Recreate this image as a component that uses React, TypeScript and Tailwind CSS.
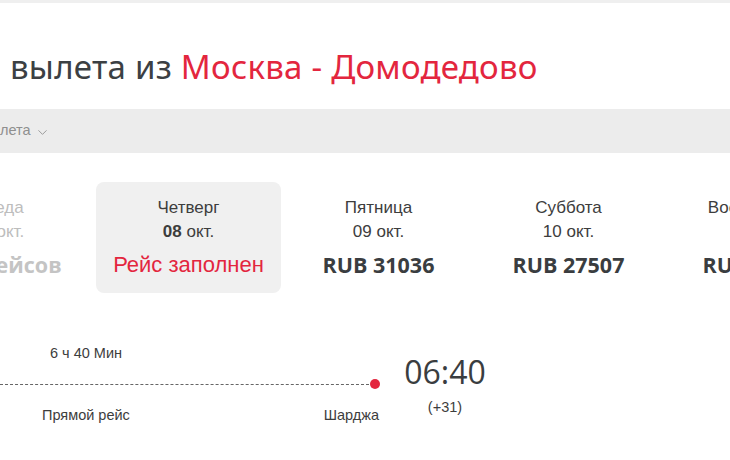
import { ChevronDown } from "lucide-react";

interface DayProps {
  day: string;
  date: string;
  boldDate?: boolean;
  price?: string;
  full?: boolean;
  empty?: boolean;
  active?: boolean;
}

const days: DayProps[] = [
  { day: "Среда", date: "07 окт.", empty: true },
  { day: "Четверг", date: "08 окт.", boldDate: true, full: true, active: true },
  { day: "Пятница", date: "09 окт.", price: "RUB 31036" },
  { day: "Суббота", date: "10 окт.", price: "RUB 27507" },
  { day: "Воскресенье", date: "11 окт.", price: "RUB 29114" },
];

const DayCard = ({ day, date, boldDate, price, full, empty, active }: DayProps) => {
  const [num, ...rest] = date.split(" ");
  return (
    <div
      className={`w-[185px] h-[111px] shrink-0 rounded-[8px] flex flex-col items-center pt-[16px] font-['Liberation_Sans',Arial,sans-serif] ${
        active ? "bg-[#f0f0f0]" : ""
      } ${empty ? "text-[#bdbdbd]" : "text-[#3d3d3d]"}`}
    >
      <div className="text-[17px] leading-[20px]">{day}</div>
      <div className="text-[17px] leading-[20px] mt-[4px]">
        <span className={boldDate ? "font-bold" : ""}>{num}</span> {rest.join(" ")}
      </div>
      {full && <div className="text-[22px] leading-[26px] mt-[10px] text-[#e3263e]">Рейс заполнен</div>}
      {price && (
        <div className="text-[21.5px] leading-[26px] mt-[10px] font-bold font-['Open_Sans',sans-serif] text-[#3a3d40]">
          {price}
        </div>
      )}
      {empty && (
        <div className="text-[21.5px] leading-[26px] mt-[10px] font-bold font-['Open_Sans',sans-serif] text-[#c4c4c4]">
          Нет рейсов
        </div>
      )}
    </div>
  );
};

export default function App() {
  return (
    <div className="w-[730px] h-[460px] overflow-hidden bg-white font-['Liberation_Sans',Arial,sans-serif]">
      <div className="h-[3px] bg-[#efefef]" />

      <h1 className="pl-[10px] pt-[42px] h-[106px] text-[33px] leading-[44px] font-['Noto_Sans',sans-serif] text-[#3c4043] tracking-[0.25px]">
        вылета из <span className="text-[#e3263e]">Москва - Домодедово</span>
      </h1>

      <div className="h-[44px] bg-[#ececec] flex items-center text-[14.5px] text-[#8f8f8f]">
        <span>лета</span>
        <ChevronDown size={15} strokeWidth={1.4} className="ml-[4px] mt-[2px]" />
      </div>

      <div className="flex gap-[5px] ml-[-94px] mt-[29px]">
        {days.map((d) => (
          <DayCard key={d.day} {...d} />
        ))}
      </div>

      <div className="flex mt-[51px]">
        <div className="w-[380px] shrink-0 text-[14.5px] text-[#3d3d3d]">
          <div className="pl-[50px] leading-[18px]">6 ч 40 Мин</div>
          <div className="flex items-center mt-[17px] h-[10px]">
            <div className="flex-1 border-t-[1.5px] border-dashed border-[#666] mr-[1px]" />
            <div className="w-[10px] h-[10px] rounded-full bg-[#e3263e]" />
          </div>
          <div className="flex justify-between mt-[17px] pl-[42px] pr-[1px] leading-[18px]">
            <span>Прямой рейс</span>
            <span>Шарджа</span>
          </div>
        </div>
        <div className="ml-[23px] w-[84px] flex flex-col items-center mt-[9px]">
          <div className="text-[32px] leading-[38px] text-[#3a3d40] font-['Open_Sans',sans-serif]">06:40</div>
          <div className="text-[14.5px] leading-[18px] mt-[7px] text-[#3d3d3d]">(+31)</div>
        </div>
      </div>
    </div>
  );
}
